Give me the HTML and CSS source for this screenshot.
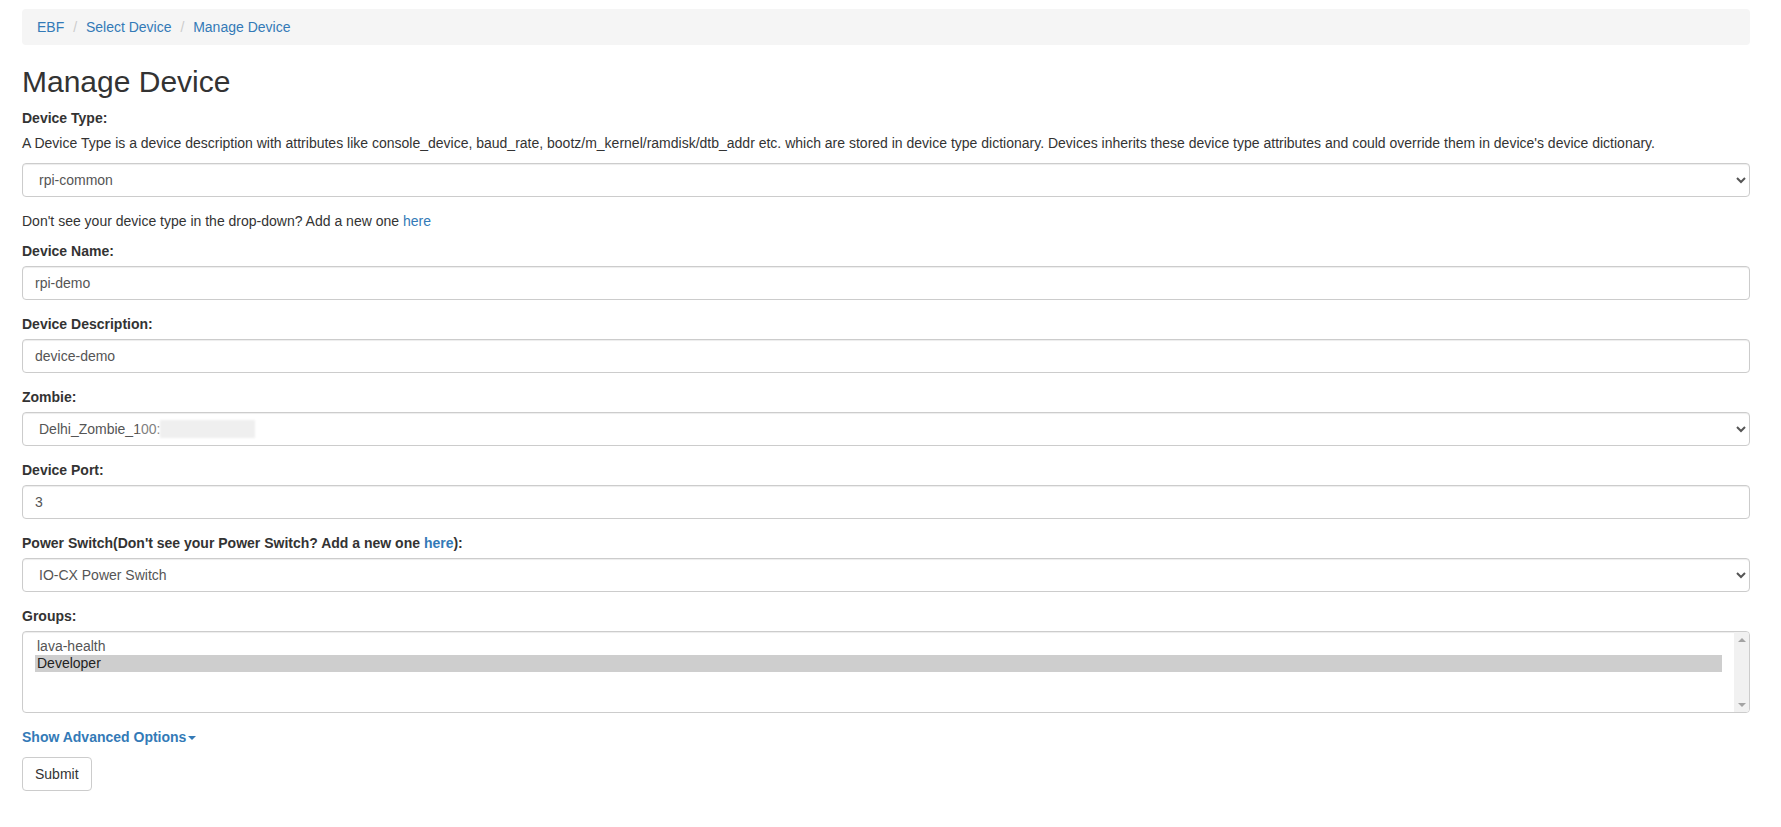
FILE: index.html
```html
<!DOCTYPE html>
<html lang="en">
<head>
<meta charset="utf-8">
<title>Manage Device</title>
<link rel="stylesheet" href="styles.css">
</head>
<body>
<div class="container">
  <ol class="breadcrumb">
    <li><a href="#">EBF</a></li>
    <li><a href="#">Select Device</a></li>
    <li><a href="#">Manage Device</a></li>
  </ol>
  <h2 class="page-title">Manage Device</h2>
  <form class="device-form">
    <div class="form-group">
      <label for="device_type">Device Type:</label>
      <p class="help">A Device Type is a device description with attributes like console_device, baud_rate, bootz/m_kernel/ramdisk/dtb_addr etc. which are stored in device type dictionary. Devices inherits these device type attributes and could override them in device's device dictionary.</p>
      <select id="device_type" class="form-control">
        <option>rpi-common</option>
      </select>
    </div>
    <p class="hint">Don't see your device type in the drop-down? Add a new one <a href="#">here</a></p>
    <div class="form-group">
      <label for="device_name">Device Name:</label>
      <input id="device_name" class="form-control" type="text" value="rpi-demo">
    </div>
    <div class="form-group">
      <label for="device_desc">Device Description:</label>
      <input id="device_desc" class="form-control" type="text" value="device-demo">
    </div>
    <div class="form-group">
      <label for="zombie">Zombie:</label>
      <div class="redact-wrap">
        <select id="zombie" class="form-control">
          <option>Delhi_Zombie_100:</option>
        </select>
        <span class="fade"></span>
        <span class="redact"></span>
      </div>
    </div>
    <div class="form-group">
      <label for="port">Device Port:</label>
      <input id="port" class="form-control" type="text" value="3">
    </div>
    <div class="form-group">
      <label for="pswitch">Power Switch(Don't see your Power Switch? Add a new one <a href="#">here</a>):</label>
      <select id="pswitch" class="form-control">
        <option>IO-CX Power Switch</option>
      </select>
    </div>
    <div class="form-group">
      <label id="groups_label">Groups:</label>
      <div class="listbox" role="listbox" aria-multiselectable="true" aria-labelledby="groups_label">
        <div class="lb-options">
          <div class="lb-opt" role="option">lava-health</div>
          <div class="lb-opt selected" role="option" aria-selected="true">Developer</div>
        </div>
        <div class="lb-scroll">
          <span class="lb-btn"><span class="tri-up"></span></span>
          <span class="lb-btn"><span class="tri-down"></span></span>
        </div>
      </div>
    </div>
    <div class="advanced">
      <a href="#" class="adv-link">Show Advanced Options<span class="caret"></span></a>
    </div>
    <button type="submit" class="btn">Submit</button>
  </form>
</div>
</body>
</html>
```
FILE: styles.css
```css
html, body {
  margin: 0;
  padding: 0;
  background: #fff;
}
body {
  font-family: "Liberation Sans", Arial, Helvetica, sans-serif;
  font-size: 14px;
  line-height: 20px;
  color: #333;
}
a {
  color: #337ab7;
  text-decoration: none;
}
.container {
  padding: 9px 31px 20px 22px;
}
.breadcrumb {
  list-style: none;
  margin: 0 0 20px;
  padding: 8px 15px;
  background: #f5f5f5;
  border-radius: 4px;
}
.breadcrumb li {
  display: inline-block;
}
.breadcrumb li + li::before {
  content: "/\00a0";
  padding: 0 5px;
  color: #ccc;
}
.page-title {
  font-size: 30px;
  font-weight: 500;
  line-height: 33px;
  margin: 20px 0 10px;
}
.device-form {
  margin: 0;
}
.form-group {
  margin-bottom: 14px;
}
label {
  display: inline-block;
  max-width: 100%;
  margin-bottom: 5px;
  font-weight: bold;
}
.help {
  margin: 0 0 10px;
}
.hint {
  margin: 0 0 10px;
}
.form-control {
  display: block;
  width: 100%;
  box-sizing: border-box;
  height: 34px;
  padding: 6px 12px;
  font-family: inherit;
  font-size: 14px;
  line-height: 20px;
  color: #555;
  background: #fff;
  border: 1px solid #ccc;
  border-radius: 4px;
  box-shadow: inset 0 1px 1px rgba(0, 0, 0, .075);
  margin: 0;
}
.listbox {
  display: flex;
  height: 82px;
  box-sizing: border-box;
  border: 1px solid #ccc;
  border-radius: 4px;
  box-shadow: inset 0 1px 1px rgba(0, 0, 0, .075);
  background: #fff;
  overflow: hidden;
}
.lb-options {
  flex: 1;
  padding: 6px 12px;
  color: #555;
}
.lb-opt {
  line-height: 17px;
  padding: 0 2px;
}
.lb-opt.selected {
  background: #cecece;
  color: #222;
}
.lb-scroll {
  width: 15px;
  background: #f1f1f1;
  display: flex;
  flex-direction: column;
  justify-content: space-between;
}
.lb-btn {
  height: 15px;
  display: flex;
  align-items: center;
  justify-content: center;
}
.tri-up, .tri-down {
  width: 0;
  height: 0;
  border-left: 4px solid transparent;
  border-right: 4px solid transparent;
}
.tri-up {
  border-bottom: 4px solid #a3a3a3;
}
.tri-down {
  border-top: 4px solid #a3a3a3;
}
.redact-wrap {
  position: relative;
}
.fade {
  position: absolute;
  left: 116px;
  top: 8px;
  width: 22px;
  height: 18px;
  background: rgba(255, 255, 255, 0.25);
}
.redact {
  position: absolute;
  left: 138px;
  top: 8px;
  width: 95px;
  height: 18px;
  background: #efefef;
  filter: blur(1px);
}
.advanced {
  margin-bottom: 10px;
}
.adv-link {
  font-weight: bold;
}
.caret {
  display: inline-block;
  width: 0;
  height: 0;
  margin-left: 2px;
  vertical-align: middle;
  border-top: 4px solid;
  border-right: 4px solid transparent;
  border-left: 4px solid transparent;
}
.btn {
  display: inline-block;
  padding: 6px 12px;
  font-family: inherit;
  font-size: 14px;
  line-height: 20px;
  color: #333;
  background: #fff;
  border: 1px solid #ccc;
  border-radius: 4px;
  cursor: pointer;
}
```
